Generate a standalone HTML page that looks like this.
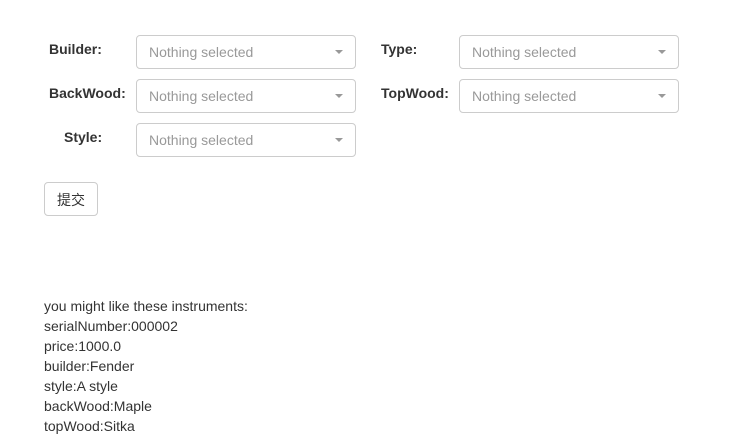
<!DOCTYPE html>
<html><head><style>
body{margin:0;background:#fff;font-family:"Liberation Sans","Noto Sans CJK SC",sans-serif;font-size:14px;color:#333;}
.lbl{position:absolute;font-weight:bold;font-size:14px;line-height:20px;}
.sel{position:absolute;width:218px;height:32px;border:1px solid #ccc;border-radius:4px;box-sizing:content-box;}
.sel span{position:absolute;left:12px;top:6px;color:#999;line-height:20px;}
.sel i{position:absolute;right:12px;top:14px;width:0;height:0;border-left:4px solid transparent;border-right:4px solid transparent;border-top:4px solid #999;}
.btn{position:absolute;left:44px;top:182px;width:52px;height:32px;border:1px solid #ccc;border-radius:4px;text-align:center;line-height:34px;font-size:14px;}
.out{position:absolute;left:44px;top:296px;line-height:20px;}
</style></head><body>
<div class="lbl" style="left:49px;top:39px">Builder:</div>
<div class="sel" style="left:136px;top:35px"><span>Nothing selected</span><i></i></div>
<div class="lbl" style="left:381px;top:39px">Type:</div>
<div class="sel" style="left:459px;top:35px"><span>Nothing selected</span><i></i></div>
<div class="lbl" style="left:49px;top:83px">BackWood:</div>
<div class="sel" style="left:136px;top:79px"><span>Nothing selected</span><i></i></div>
<div class="lbl" style="left:381px;top:83px">TopWood:</div>
<div class="sel" style="left:459px;top:79px"><span>Nothing selected</span><i></i></div>
<div class="lbl" style="left:64px;top:127px">Style:</div>
<div class="sel" style="left:136px;top:123px"><span>Nothing selected</span><i></i></div>
<div class="btn">提交</div>
<div class="out">you might like these instruments:<br>serialNumber:000002<br>price:1000.0<br>builder:Fender<br>style:A style<br>backWood:Maple<br>topWood:Sitka</div>
</body></html>
